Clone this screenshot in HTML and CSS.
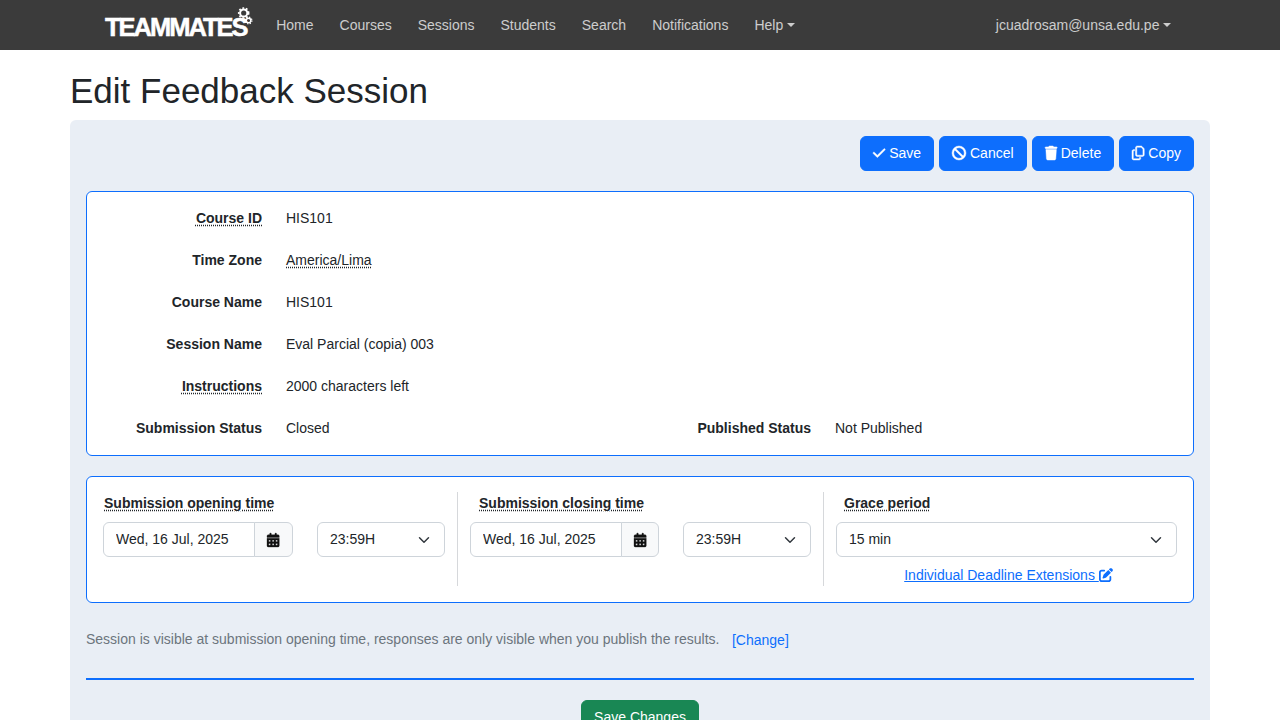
FILE: index.html
```html
<!DOCTYPE html>
<html lang="en">
<head>
    <meta charset="UTF-8">
    <title>Edit Feedback Session</title>
    <link rel="stylesheet" href="styles.css">
</head>
<body>
<nav class="navbar">
    <a class="brand" href="#">
        <span class="brand-name">TEAMMATES</span>
        <svg class="brand-gears" viewBox="0 0 16 18" width="16" height="18" fill="none" stroke="#fff">
            <circle cx="6.7" cy="6" r="3.6" stroke-width="2"/>
            <circle cx="6.7" cy="6" r="5" stroke-width="1.6" stroke-dasharray="1.8 1.8"/>
            <circle cx="11.5" cy="13.5" r="2.3" stroke-width="1.4"/>
            <circle cx="11.5" cy="13.5" r="3.4" stroke-width="1.2" stroke-dasharray="1.3 1.4"/>
        </svg>
    </a>
    <a class="nav-link" href="#">Home</a>
    <a class="nav-link" href="#">Courses</a>
    <a class="nav-link" href="#">Sessions</a>
    <a class="nav-link" href="#">Students</a>
    <a class="nav-link" href="#">Search</a>
    <a class="nav-link" href="#">Notifications</a>
    <a class="nav-link caret" href="#">Help</a>
    <a class="nav-link caret nav-user" href="#">jcuadrosam@unsa.edu.pe</a>
</nav>

<main class="container">
    <h1 class="page-title">Edit Feedback Session</h1>

    <div class="panel">
        <div class="actions">
            <button class="btn">
                <svg class="icon icon-narrow" viewBox="0 0 448 512"><path d="M438.6 105.4c12.5 12.5 12.5 32.8 0 45.3l-256 256c-12.5 12.5-32.8 12.5-45.3 0l-128-128c-12.5-12.5-12.5-32.8 0-45.3s32.8-12.5 45.3 0L160 338.7 393.4 105.4c12.5-12.5 32.8-12.5 45.3 0z"/></svg>
                Save
            </button>
            <button class="btn">
                <svg class="icon" viewBox="0 0 512 512"><path d="M367.2 412.5L99.5 144.8C77.1 176.1 64 214.5 64 256c0 106 86 192 192 192c41.5 0 79.9-13.1 111.2-35.5zm45.3-45.3C434.9 335.9 448 297.5 448 256c0-106-86-192-192-192c-41.5 0-79.9 13.1-111.2 35.5L412.5 367.2zM0 256a256 256 0 1 1 512 0A256 256 0 1 1 0 256z"/></svg>
                Cancel
            </button>
            <button class="btn">
                <svg class="icon icon-narrow" viewBox="0 0 448 512"><path d="M135.2 17.7L128 32H32C14.3 32 0 46.3 0 64S14.3 96 32 96H416c17.7 0 32-14.3 32-32s-14.3-32-32-32H320l-7.2-14.3C307.4 6.8 296.3 0 284.2 0H163.8c-12.1 0-23.2 6.8-28.6 17.7zM416 128H32L53.2 467c1.6 25.3 22.6 45 47.9 45H346.9c25.3 0 46.3-19.7 47.9-45L416 128z"/></svg>
                Delete
            </button>
            <button class="btn">
                <svg class="icon icon-narrow" viewBox="0 0 448 512"><path d="M384 336H192c-8.8 0-16-7.2-16-16V64c0-8.8 7.2-16 16-16l140.1 0L400 115.9V320c0 8.8-7.2 16-16 16zM192 384H384c35.3 0 64-28.7 64-64V115.9c0-12.7-5.1-24.9-14.1-33.9L366.1 14.1c-9-9-21.2-14.1-33.9-14.1H192c-35.3 0-64 28.7-64 64V320c0 35.3 28.7 64 64 64zM64 128c-35.3 0-64 28.7-64 64V448c0 35.3 28.7 64 64 64H256c35.3 0 64-28.7 64-64V416H272v32c0 8.8-7.2 16-16 16H64c-8.8 0-16-7.2-16-16V192c0-8.8 7.2-16 16-16H96V128H64z"/></svg>
                Copy
            </button>
        </div>

        <section class="card info-card">
            <div class="info-row">
                <span class="info-label"><span class="hint">Course ID</span></span>
                <span>HIS101</span>
            </div>
            <div class="info-row">
                <span class="info-label">Time Zone</span>
                <span class="hint">America/Lima</span>
            </div>
            <div class="info-row">
                <span class="info-label">Course Name</span>
                <span>HIS101</span>
            </div>
            <div class="info-row">
                <span class="info-label">Session Name</span>
                <span>Eval Parcial (copia) 003</span>
            </div>
            <div class="info-row">
                <span class="info-label"><span class="hint">Instructions</span></span>
                <span>2000 characters left</span>
            </div>
            <div class="info-row">
                <div class="info-half">
                    <span class="info-label">Submission Status</span>
                    <span>Closed</span>
                </div>
                <div class="info-half">
                    <span class="info-label">Published Status</span>
                    <span>Not Published</span>
                </div>
            </div>
        </section>

        <section class="card time-card">
            <div class="time-col time-open">
                <div class="time-label"><span class="hint">Submission opening time</span></div>
                <div class="time-inputs">
                    <div class="date-group">
                        <input class="date-input" type="text" value="Wed, 16 Jul, 2025">
                        <span class="date-btn"><svg class="icon-cal" viewBox="0 0 448 512"><path d="M128 0c17.7 0 32 14.3 32 32V64H288V32c0-17.7 14.3-32 32-32s32 14.3 32 32V64h48c26.5 0 48 21.5 48 48v48H0V112C0 85.5 21.5 64 48 64H96V32c0-17.7 14.3-32 32-32zM0 192H448V464c0 26.5-21.5 48-48 48H48c-26.5 0-48-21.5-48-48V192zm64 80v32c0 8.8 7.2 16 16 16h32c8.8 0 16-7.2 16-16V272c0-8.8-7.2-16-16-16H80c-8.8 0-16 7.2-16 16zm128 0v32c0 8.8 7.2 16 16 16h32c8.8 0 16-7.2 16-16V272c0-8.8-7.2-16-16-16H208c-8.8 0-16 7.2-16 16zm144-16c-8.8 0-16 7.2-16 16v32c0 8.8 7.2 16 16 16h32c8.8 0 16-7.2 16-16V272c0-8.8-7.2-16-16-16H336zM64 400v32c0 8.8 7.2 16 16 16h32c8.8 0 16-7.2 16-16V400c0-8.8-7.2-16-16-16H80c-8.8 0-16 7.2-16 16zm144-16c-8.8 0-16 7.2-16 16v32c0 8.8 7.2 16 16 16h32c8.8 0 16-7.2 16-16V400c0-8.8-7.2-16-16-16H208zm112 16v32c0 8.8 7.2 16 16 16h32c8.8 0 16-7.2 16-16V400c0-8.8-7.2-16-16-16H336c-8.8 0-16 7.2-16 16z"/></svg></span>
                    </div>
                    <select class="select time-select"><option>23:59H</option></select>
                </div>
            </div>
            <div class="time-col time-close">
                <div class="time-label"><span class="hint">Submission closing time</span></div>
                <div class="time-inputs">
                    <div class="date-group">
                        <input class="date-input" type="text" value="Wed, 16 Jul, 2025">
                        <span class="date-btn"><svg class="icon-cal" viewBox="0 0 448 512"><path d="M128 0c17.7 0 32 14.3 32 32V64H288V32c0-17.7 14.3-32 32-32s32 14.3 32 32V64h48c26.5 0 48 21.5 48 48v48H0V112C0 85.5 21.5 64 48 64H96V32c0-17.7 14.3-32 32-32zM0 192H448V464c0 26.5-21.5 48-48 48H48c-26.5 0-48-21.5-48-48V192zm64 80v32c0 8.8 7.2 16 16 16h32c8.8 0 16-7.2 16-16V272c0-8.8-7.2-16-16-16H80c-8.8 0-16 7.2-16 16zm128 0v32c0 8.8 7.2 16 16 16h32c8.8 0 16-7.2 16-16V272c0-8.8-7.2-16-16-16H208c-8.8 0-16 7.2-16 16zm144-16c-8.8 0-16 7.2-16 16v32c0 8.8 7.2 16 16 16h32c8.8 0 16-7.2 16-16V272c0-8.8-7.2-16-16-16H336zM64 400v32c0 8.8 7.2 16 16 16h32c8.8 0 16-7.2 16-16V400c0-8.8-7.2-16-16-16H80c-8.8 0-16 7.2-16 16zm144-16c-8.8 0-16 7.2-16 16v32c0 8.8 7.2 16 16 16h32c8.8 0 16-7.2 16-16V400c0-8.8-7.2-16-16-16H208zm112 16v32c0 8.8 7.2 16 16 16h32c8.8 0 16-7.2 16-16V400c0-8.8-7.2-16-16-16H336c-8.8 0-16 7.2-16 16z"/></svg></span>
                    </div>
                    <select class="select time-select"><option>23:59H</option></select>
                </div>
            </div>
            <div class="time-col time-grace">
                <div class="time-label"><span class="hint">Grace period</span></div>
                <select class="select grace-select"><option>15 min</option></select>
                <div class="extensions">
                    <a href="#">Individual Deadline Extensions <svg class="icon-edit" viewBox="0 0 512 512"><path d="M471.6 21.7c-21.9-21.9-57.3-21.9-79.2 0L362.3 51.7l97.9 97.9 30.1-30.1c21.9-21.9 21.9-57.3 0-79.2L471.6 21.7zm-299.2 220c-6.1 6.1-10.8 13.6-13.5 21.9l-29.6 88.8c-2.9 8.6-.6 18.1 5.8 24.6s15.9 8.7 24.6 5.8l88.8-29.6c8.2-2.7 15.7-7.4 21.9-13.5L437.7 172.3 339.7 74.3 172.4 241.7zM96 64C43 64 0 107 0 160V416c0 53 43 96 96 96H352c53 0 96-43 96-96V320c0-17.7-14.3-32-32-32s-32 14.3-32 32v96c0 17.7-14.3 32-32 32H96c-17.7 0-32-14.3-32-32V160c0-17.7 14.3-32 32-32h96c17.7 0 32-14.3 32-32s-14.3-32-32-32H96z"/></svg></a>
                </div>
            </div>
        </section>

        <div class="visibility">
            <span class="visibility-text">Session is visible at submission opening time, responses are only visible when you publish the results.</span>
            <a class="change-link" href="#">[Change]</a>
        </div>

        <hr class="divider">

        <div class="save-row">
            <button class="btn btn-save">Save Changes</button>
        </div>
    </div>
</main>
</body>
</html>
```

FILE: styles.css
```css
* {
    box-sizing: border-box;
}

body {
    margin: 0;
    font-family: "Liberation Sans", Arial, sans-serif;
    font-size: 14px;
    line-height: 21px;
    color: #212529;
    background-color: #fff;
}

a {
    color: #0d6efd;
}

/* navbar */
.navbar {
    display: flex;
    align-items: center;
    height: 50px;
    padding-left: 105px;
    padding-right: 96px;
    background-color: #3b3b3b;
}

.brand {
    display: flex;
    width: 158.2px;
    height: 50px;
    color: #fff;
    text-decoration: none;
}

.brand-name {
    margin-top: 14px;
    height: 26px;
    font-size: 25.5px;
    line-height: 26px;
    font-weight: bold;
    letter-spacing: -2px;
    -webkit-text-stroke: 0.5px #fff;
}

.brand-gears {
    margin-top: 7px;
    margin-left: -10px;
}

.nav-link {
    padding: 0 13px;
    color: rgba(255, 255, 255, 0.75);
    text-decoration: none;
}

.caret::after {
    content: "";
    display: inline-block;
    margin-left: 3.57px;
    vertical-align: 3px;
    border-top: 4px solid;
    border-left: 4px solid transparent;
    border-right: 4px solid transparent;
}

.nav-user {
    margin-left: auto;
}

/* page */
.container {
    width: 1140px;
    margin: 0 auto;
}

.page-title {
    margin: 0;
    padding-top: 20px;
    height: 70px;
    font-size: 35px;
    line-height: 42px;
    font-weight: normal;
}

.panel {
    padding: 16px;
    background-color: #e9eef5;
    border-radius: 6px;
}

.actions {
    display: flex;
    justify-content: flex-end;
    gap: 5px;
    margin-bottom: 20px;
}

.btn {
    height: 35px;
    padding: 6px 12px;
    border: 1px solid #0d6efd;
    border-radius: 6px;
    background-color: #0d6efd;
    color: #fff;
    font-family: inherit;
    font-size: 14px;
    line-height: 21px;
}

.icon {
    width: 14px;
    height: 14px;
    fill: #fff;
    stroke: #fff;
    stroke-width: 16;
    overflow: visible;
    vertical-align: -2px;
}

.icon-narrow {
    width: 12.25px;
}

.card {
    background-color: #fff;
    border: 1px solid #0d6efd;
    border-radius: 6px;
}

/* session info */
.info-card {
    display: flex;
    flex-direction: column;
    gap: 21px;
    padding: 16px 0;
    margin-bottom: 20px;
}

.info-row {
    display: flex;
    gap: 24px;
}

.info-row > .info-half {
    width: 549px;
    display: flex;
    gap: 24px;
}

.info-row > .info-half + .info-half {
    margin-left: -24px;
}

.info-label {
    width: 175px;
    text-align: right;
    font-weight: bold;
}

.hint {
    text-decoration: underline dotted;
    text-underline-offset: 2px;
}

/* dates */
.time-card {
    display: flex;
    height: 127px;
    padding: 15px 16px;
    margin-bottom: 26px;
}

.time-col {
    height: 94px;
}

.time-open {
    width: 355px;
    border-right: 1px solid #d6d8db;
}

.time-close {
    width: 366px;
    padding-left: 12px;
    border-right: 1px solid #d6d8db;
}

.time-grace {
    flex: 1;
    padding-left: 12px;
}

.time-label {
    margin-top: 1px;
    margin-bottom: 8px;
    font-weight: bold;
}

.time-open .time-label {
    padding-left: 1px;
}

.time-close .time-label {
    padding-left: 9px;
}

.time-grace .time-label {
    padding-left: 8px;
}

.time-inputs {
    display: flex;
    gap: 24px;
}

.date-group {
    display: flex;
    width: 190px;
    height: 35px;
}

.time-close .date-group {
    width: 189px;
}

.time-close .date-btn {
    width: 38px;
}

.date-input {
    flex: 1;
    min-width: 0;
    padding: 5px 12px 7px;
    border: 1px solid #ced4da;
    border-radius: 6px 0 0 6px;
    font-family: inherit;
    font-size: 14px;
    color: #212529;
}

.date-btn {
    display: flex;
    align-items: center;
    justify-content: center;
    width: 39px;
    margin-left: -1px;
    border: 1px solid #ced4da;
    border-radius: 0 6px 6px 0;
    background-color: #f8f9fa;
}

.icon-cal {
    width: 12.25px;
    height: 14px;
    fill: #111;
    stroke: #111;
    stroke-width: 12;
    overflow: visible;
}

.select {
    display: block;
    height: 35px;
    padding: 5px 36px 7px 12px;
    border: 1px solid #ced4da;
    border-radius: 6px;
    font-family: inherit;
    font-size: 14px;
    color: #212529;
    appearance: none;
    background-color: #fff;
    background-image: url("data:image/svg+xml,%3csvg xmlns='http://www.w3.org/2000/svg' viewBox='0 0 16 16'%3e%3cpath fill='none' stroke='%23343a40' stroke-linecap='round' stroke-linejoin='round' stroke-width='2' d='m2 5 6 6 6-6'/%3e%3c/svg%3e");
    background-repeat: no-repeat;
    background-position: right 12px center;
    background-size: 16px 12px;
}

.time-select {
    width: 128px;
}

.grace-select {
    width: 341px;
}

.extensions {
    margin-top: 8px;
    padding-left: 4px;
    text-align: center;
}

.icon-edit {
    width: 14px;
    height: 14px;
    fill: #0d6efd;
    vertical-align: -2px;
}

/* bottom */
.visibility {
    display: flex;
    align-items: center;
    gap: 12.5px;
    height: 21px;
    margin-bottom: 28px;
}

.visibility-text {
    color: #6c757d;
}

.change-link {
    margin-top: 1px;
    text-decoration: none;
}

.divider {
    margin: 0 0 20px;
    border: 0;
    border-top: 2px solid #0d6efd;
}

.save-row {
    display: flex;
    justify-content: center;
    padding-bottom: 16px;
}

.btn-save {
    background-color: #198754;
    border-color: #198754;
}
```
